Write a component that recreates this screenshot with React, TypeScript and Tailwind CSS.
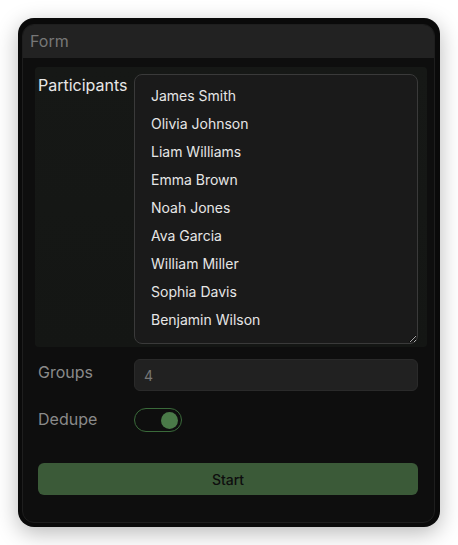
import React from "react";

const names = [
  "James Smith",
  "Olivia Johnson",
  "Liam Williams",
  "Emma Brown",
  "Noah Jones",
  "Ava Garcia",
  "William Miller",
  "Sophia Davis",
  "Benjamin Wilson",
];

const font = 'Inter, "Liberation Sans", Arial, sans-serif';

export default function App() {
  return (
    <div
      className="w-[458px] h-[545px] bg-white pt-[18px] pl-[18px]"
      style={{ fontFamily: font }}
    >
      <div className="w-[422px] h-[509px] rounded-[16px] bg-[#0a0a0a] pt-[6px] pl-[4px] pr-[5px] pb-[4px] shadow-[0_6px_22px_rgba(0,0,0,0.28)]">
        <div className="h-full rounded-[12px] border border-[#1e1e1e] bg-[#0e0e0e] overflow-hidden flex flex-col">
          <div className="h-[33px] shrink-0 bg-[#222222] flex items-center pl-[7px] pb-[1px] text-[16px] text-[#777777]">
            Form
          </div>
          <div className="flex flex-col pt-[9px]">
            <div className="ml-[12px] mr-[7px] h-[280px] rounded-[4px] bg-gradient-to-b from-[#161816] to-[#141614] flex pl-[3px] pr-[9px] pt-[7px]">
              <div className="w-[96px] shrink-0 text-[16px] text-[#e8e8e8] pt-[1px] leading-[20px]">
                Participants
              </div>
              <textarea
                className="w-[284px] h-[270px] rounded-[8px] border border-[#3a3a3a] bg-[#1a1a1a] text-[#e6e6e6] text-[14px] leading-[28px] pl-[16px] pr-[8px] pt-[7px] pb-[9px] outline-none overflow-hidden"
                style={{ fontFamily: font }}
                defaultValue={names.join("\n")}
              />
            </div>
            <div className="flex items-center pl-[15px] pr-[16px] mt-[12px]">
              <div className="w-[96px] shrink-0 text-[16px] text-[#8a8a8a] -mt-[6px]">Groups</div>
              <div className="flex-1 h-[32px] rounded-[6px] border border-[#2a2a2a] bg-[#212121] flex items-center pl-[9px] text-[14px] text-[#777777]">
                4
              </div>
            </div>
            <div className="flex items-center pl-[15px] pr-[16px] mt-[17px]">
              <div className="w-[96px] shrink-0 text-[16px] text-[#8a8a8a] -mt-[2px]">Dedupe</div>
              <div className="w-[48px] h-[24px] rounded-full border border-[#3a6a3a] flex items-center justify-end pr-[3px]">
                <div className="w-[17px] h-[17px] rounded-full bg-[#4a7a48]" />
              </div>
            </div>
            <div className="pl-[15px] pr-[16px] mt-[31px]">
              <div className="h-[32px] rounded-[6px] bg-[#3b5a38] flex items-center justify-center text-[14px] font-medium text-[#0e0e0e]">
                Start
              </div>
            </div>
          </div>
        </div>
      </div>
    </div>
  );
}
